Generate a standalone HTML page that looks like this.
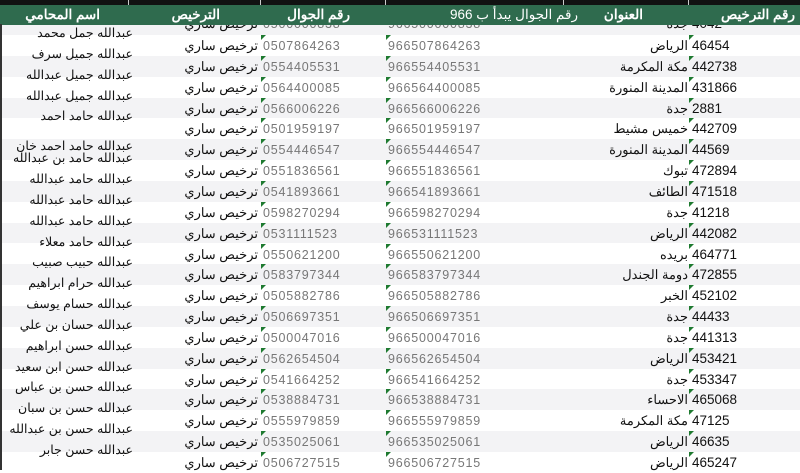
<!DOCTYPE html>
<html><head><meta charset="utf-8"><style>
*{margin:0;padding:0;box-sizing:border-box}
body{width:800px;height:470px;overflow:hidden;background:#fff;position:relative;font-family:"Liberation Sans","Noto Sans CJK SC",sans-serif;font-size:13px;color:#111}
.top{position:absolute;left:0;top:0;width:800px;height:5px;background:#111}
.top i{position:absolute;top:0;width:1px;height:5px;background:#ccc}
.hd{position:absolute;left:0;top:5px;width:800px;height:20px;background:#2f6b4e;color:#fff;font-weight:bold;font-size:13.5px}
.hd span{position:absolute;top:2px;white-space:nowrap}
.r{position:absolute;left:0;width:800px;height:20.85px}
.g{background:#f3f3f5}
.r span{position:absolute;top:3px;white-space:nowrap;line-height:16px}
.nm{right:667px;top:-10px!important;font-size:12.5px}
.lc{right:542px}
.ph{left:263px;color:#777;letter-spacing:.8px;font-size:12.5px}
.p9{left:388px;color:#777;letter-spacing:.8px;font-size:12.5px}
.ad{right:112px}
.no{left:692px;font-size:13.5px}
.m{position:absolute;top:0;width:0;height:0;border-top:5px solid #1e7a30;border-right:5px solid transparent}
.edge{position:absolute;left:0;top:24px;width:2px;height:446px;background:#333}
</style></head><body>
<div class="top"><i style="left:128px"></i><i style="left:260px"></i><i style="left:385px"></i><i style="left:563px"></i><i style="left:688px"></i></div>
<div class="r g" style="top:24px;height:11px;overflow:hidden"><span class="ph" style="top:-8px">0500000838</span><span class="p9" style="top:-8px">966500000838</span><span class="lc" style="top:-8px">ترخيص ساري</span><span class="no" style="top:-8px">4042</span><span class="ad" style="top:-8px">جدة</span></div>
<div class="r" style="top:35px"><div class="m" style="left:261px"></div><div class="m" style="left:386px"></div><div class="m" style="left:689px"></div><span class="nm">عبدالله جمل محمد</span><span class="lc">ترخيص ساري</span><span class="ph">0507864263</span><span class="p9">966507864263</span><span class="ad">الرياض</span><span class="no">46454</span></div>
<div class="r g" style="top:55.85px"><div class="m" style="left:261px"></div><div class="m" style="left:386px"></div><div class="m" style="left:689px"></div><span class="nm">عبدالله جميل سرف</span><span class="lc">ترخيص ساري</span><span class="ph">0554405531</span><span class="p9">966554405531</span><span class="ad">مكة المكرمة</span><span class="no">442738</span></div>
<div class="r" style="top:76.7px"><div class="m" style="left:261px"></div><div class="m" style="left:386px"></div><div class="m" style="left:689px"></div><span class="nm">عبدالله جميل عبدالله</span><span class="lc">ترخيص ساري</span><span class="ph">0564400085</span><span class="p9">966564400085</span><span class="ad">المدينة المنورة</span><span class="no">431866</span></div>
<div class="r g" style="top:97.55px"><div class="m" style="left:261px"></div><div class="m" style="left:386px"></div><div class="m" style="left:689px"></div><span class="nm">عبدالله جميل عبدالله</span><span class="lc">ترخيص ساري</span><span class="ph">0566006226</span><span class="p9">966566006226</span><span class="ad">جدة</span><span class="no">2881</span></div>
<div class="r" style="top:118.4px"><div class="m" style="left:261px"></div><div class="m" style="left:386px"></div><div class="m" style="left:689px"></div><span class="nm">عبدالله حامد احمد</span><span class="lc">ترخيص ساري</span><span class="ph">0501959197</span><span class="p9">966501959197</span><span class="ad">خميس مشيط</span><span class="no">442709</span></div>
<div class="r g" style="top:139.25px"><div class="m" style="left:261px"></div><div class="m" style="left:386px"></div><div class="m" style="left:689px"></div><span class="nm" style="top:-1px!important">عبدالله حامد احمد خان</span><span class="lc">ترخيص ساري</span><span class="ph">0554446547</span><span class="p9">966554446547</span><span class="ad">المدينة المنورة</span><span class="no">44569</span></div>
<div class="r" style="top:160.1px"><div class="m" style="left:261px"></div><div class="m" style="left:386px"></div><div class="m" style="left:689px"></div><span class="nm">عبدالله حامد بن عبدالله</span><span class="lc">ترخيص ساري</span><span class="ph">0551836561</span><span class="p9">966551836561</span><span class="ad">تبوك</span><span class="no">472894</span></div>
<div class="r g" style="top:180.95px"><div class="m" style="left:261px"></div><div class="m" style="left:386px"></div><div class="m" style="left:689px"></div><span class="nm">عبدالله حامد عبدالله</span><span class="lc">ترخيص ساري</span><span class="ph">0541893661</span><span class="p9">966541893661</span><span class="ad">الطائف</span><span class="no">471518</span></div>
<div class="r" style="top:201.8px"><div class="m" style="left:261px"></div><div class="m" style="left:386px"></div><div class="m" style="left:689px"></div><span class="nm">عبدالله حامد عبدالله</span><span class="lc">ترخيص ساري</span><span class="ph">0598270294</span><span class="p9">966598270294</span><span class="ad">جدة</span><span class="no">41218</span></div>
<div class="r g" style="top:222.65px"><div class="m" style="left:261px"></div><div class="m" style="left:386px"></div><div class="m" style="left:689px"></div><span class="nm">عبدالله حامد عبدالله</span><span class="lc">ترخيص ساري</span><span class="ph">0531111523</span><span class="p9">966531111523</span><span class="ad">الرياض</span><span class="no">442082</span></div>
<div class="r" style="top:243.5px"><div class="m" style="left:261px"></div><div class="m" style="left:386px"></div><div class="m" style="left:689px"></div><span class="nm">عبدالله حامد معلاء</span><span class="lc">ترخيص ساري</span><span class="ph">0550621200</span><span class="p9">966550621200</span><span class="ad">بريده</span><span class="no">464771</span></div>
<div class="r g" style="top:264.35px"><div class="m" style="left:261px"></div><div class="m" style="left:386px"></div><div class="m" style="left:689px"></div><span class="nm">عبدالله حبيب صبيب</span><span class="lc">ترخيص ساري</span><span class="ph">0583797344</span><span class="p9">966583797344</span><span class="ad">دومة الجندل</span><span class="no">472855</span></div>
<div class="r" style="top:285.2px"><div class="m" style="left:261px"></div><div class="m" style="left:386px"></div><div class="m" style="left:689px"></div><span class="nm">عبدالله حرام ابراهيم</span><span class="lc">ترخيص ساري</span><span class="ph">0505882786</span><span class="p9">966505882786</span><span class="ad">الخبر</span><span class="no">452102</span></div>
<div class="r g" style="top:306.05px"><div class="m" style="left:261px"></div><div class="m" style="left:386px"></div><div class="m" style="left:689px"></div><span class="nm">عبدالله حسام يوسف</span><span class="lc">ترخيص ساري</span><span class="ph">0506697351</span><span class="p9">966506697351</span><span class="ad">جدة</span><span class="no">44433</span></div>
<div class="r" style="top:326.9px"><div class="m" style="left:261px"></div><div class="m" style="left:386px"></div><div class="m" style="left:689px"></div><span class="nm">عبدالله حسان بن علي</span><span class="lc">ترخيص ساري</span><span class="ph">0500047016</span><span class="p9">966500047016</span><span class="ad">جدة</span><span class="no">441313</span></div>
<div class="r g" style="top:347.75px"><div class="m" style="left:261px"></div><div class="m" style="left:386px"></div><div class="m" style="left:689px"></div><span class="nm">عبدالله حسن ابراهيم</span><span class="lc">ترخيص ساري</span><span class="ph">0562654504</span><span class="p9">966562654504</span><span class="ad">الرياض</span><span class="no">453421</span></div>
<div class="r" style="top:368.6px"><div class="m" style="left:261px"></div><div class="m" style="left:386px"></div><div class="m" style="left:689px"></div><span class="nm">عبدالله حسن ابن سعيد</span><span class="lc">ترخيص ساري</span><span class="ph">0541664252</span><span class="p9">966541664252</span><span class="ad">جدة</span><span class="no">453347</span></div>
<div class="r g" style="top:389.45px"><div class="m" style="left:261px"></div><div class="m" style="left:386px"></div><div class="m" style="left:689px"></div><span class="nm">عبدالله حسن بن عباس</span><span class="lc">ترخيص ساري</span><span class="ph">0538884731</span><span class="p9">966538884731</span><span class="ad">الاحساء</span><span class="no">465068</span></div>
<div class="r" style="top:410.3px"><div class="m" style="left:261px"></div><div class="m" style="left:386px"></div><div class="m" style="left:689px"></div><span class="nm">عبدالله حسن بن سبان</span><span class="lc">ترخيص ساري</span><span class="ph">0555979859</span><span class="p9">966555979859</span><span class="ad">مكة المكرمة</span><span class="no">47125</span></div>
<div class="r g" style="top:431.15px"><div class="m" style="left:261px"></div><div class="m" style="left:386px"></div><div class="m" style="left:689px"></div><span class="nm">عبدالله حسن بن عبدالله</span><span class="lc">ترخيص ساري</span><span class="ph">0535025061</span><span class="p9">966535025061</span><span class="ad">الرياض</span><span class="no">46635</span></div>
<div class="r" style="top:452px"><div class="m" style="left:261px"></div><div class="m" style="left:386px"></div><div class="m" style="left:689px"></div><span class="nm">عبدالله حسن جابر</span><span class="lc">ترخيص ساري</span><span class="ph">0506727515</span><span class="p9">966506727515</span><span class="ad">الرياض</span><span class="no">465247</span></div>
<div class="hd"><span style="right:700px">اسم المحامي</span><span style="right:580px">الترخيص</span><span style="right:450px">رقم الجوال</span><span style="left:450px;font-weight:normal">رقم الجوال يبدأ ب 966</span><span style="right:157px">العنوان</span><span style="right:5px">رقم الترخيص</span></div>
<div class="edge"></div>
</body></html>
